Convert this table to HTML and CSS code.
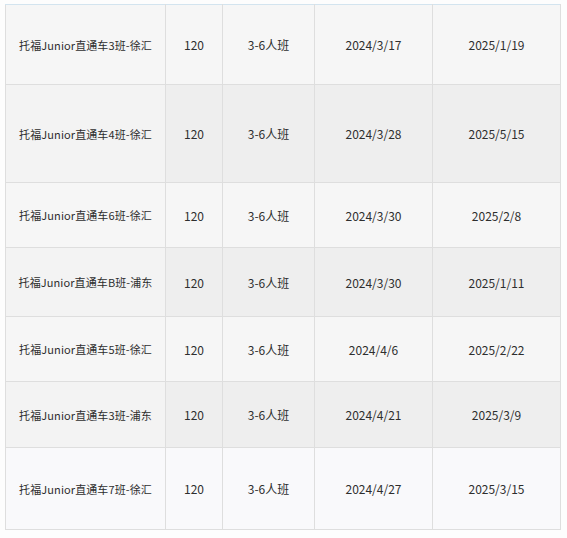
FILE: index.html
```html
<!DOCTYPE html>
<html>
<head>
<meta charset="utf-8">
<link rel="stylesheet" href="styles.css">
</head>
<body>
<div class="page">
<table class="grid">
  <colgroup>
    <col class="c1"><col class="c2"><col class="c3"><col class="c4"><col class="c5">
  </colgroup>
  <tr class="r odd h80"><td class="name">托福Junior直通车3班-徐汇</td><td>120</td><td>3-6人班</td><td>2024/3/17</td><td>2025/1/19</td></tr>
  <tr class="r even h98"><td class="name">托福Junior直通车4班-徐汇</td><td>120</td><td>3-6人班</td><td>2024/3/28</td><td>2025/5/15</td></tr>
  <tr class="r odd h65"><td class="name">托福Junior直通车6班-徐汇</td><td>120</td><td>3-6人班</td><td>2024/3/30</td><td>2025/2/8</td></tr>
  <tr class="r even h69"><td class="name">托福Junior直通车B班-浦东</td><td>120</td><td>3-6人班</td><td>2024/3/30</td><td>2025/1/11</td></tr>
  <tr class="r odd h65"><td class="name">托福Junior直通车5班-徐汇</td><td>120</td><td>3-6人班</td><td>2024/4/6</td><td>2025/2/22</td></tr>
  <tr class="r even h66"><td class="name">托福Junior直通车3班-浦东</td><td>120</td><td>3-6人班</td><td>2024/4/21</td><td>2025/3/9</td></tr>
  <tr class="r last h82"><td class="name">托福Junior直通车7班-徐汇</td><td>120</td><td>3-6人班</td><td>2024/4/27</td><td>2025/3/15</td></tr>
</table>
</div>
</body>
</html>
```
FILE: styles.css
```css
html, body {
  margin: 0;
  padding: 0;
  background: #ffffff;
}
.page {
  width: 567px;
  height: 538px;
  padding: 4px 0 0 5px;
  box-sizing: border-box;
  overflow: hidden;
  background: #fdfdfd;
}
.grid {
  border-collapse: collapse;
  table-layout: fixed;
  width: 555px;
  font-family: "Noto Sans CJK SC", "Noto Sans", sans-serif;
  font-size: 12px;
  color: #2e2e2e;
  border-top: 1px solid #d3e4ef;
}
.c1 { width: 160px; }
.c2 { width: 57px; }
.c3 { width: 92px; }
.c4 { width: 118px; }
.c5 { width: 128px; }
.grid td {
  border: 1px solid #dedede;
  text-align: center;
  vertical-align: middle;
  padding: 0;
  white-space: nowrap;
}
.grid td.name {
  font-size: 11px;
  letter-spacing: 0.1px;
}
.grid tr:first-child td { border-top-color: #d3e4ef; }
.odd td { background: #f6f6f6; }
.even td { background: #eeeeee; }
.even td.name { background: #f3f3f3; }
.last td { background: #f9f9fb; }
.h80 { height: 80px; }
.h98 { height: 98px; }
.h65 { height: 65px; }
.h69 { height: 69px; }
.h66 { height: 66px; }
.h82 { height: 82px; }
```
